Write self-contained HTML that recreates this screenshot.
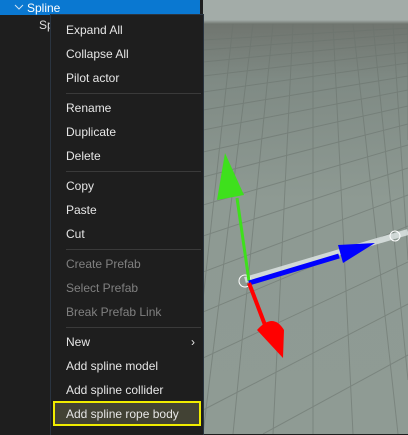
<!DOCTYPE html>
<html><head><style>
body{margin:0;width:408px;height:434px;overflow:hidden;position:relative;background:#1e1e1e;font-family:"Liberation Sans",sans-serif;}
.vp{position:absolute;left:203px;top:0;width:205px;height:434px;background:linear-gradient(#a3aca8 0,#a3aca8 20px,#70756f 24px,#7f8a84 80px,#8e9a93 200px,#8f9b94 434px);overflow:hidden}
.sel{position:absolute;left:0;top:0;width:200px;height:15px;background:#0a78d1;color:#fff;font-size:12px}
.menu{position:absolute;left:50px;top:14px;width:152px;height:420px;background:#1e1e1e;border-left:1px solid #2a3440;border-top:1px solid #2a3440;border-right:1px solid #2a3440}
.it{position:absolute;left:15px;font-size:12px;color:#e6e6e6;line-height:24px}
.dis{color:#808080}
.sep{position:absolute;left:15px;width:135px;height:1px;background:#3a3a3a}
</style></head><body>
<div class="sel"><svg style="position:absolute;left:14px;top:4px" width="10" height="7"><path d="M1 1 L5 5 L9 1" stroke="#cfe3f5" fill="none"/></svg><span style="position:absolute;left:27px;top:1px">Spline</span></div>
<div style="position:absolute;left:39px;top:18px;color:#ddd;font-size:12px">Sp</div>
<div class="vp">
<svg width="205" height="434" style="position:absolute;left:0;top:0">
<g stroke="#6a736d" stroke-width="1" fill="none" opacity="0.55">
<path d="M0 40 L205 28 M0 50 L205 34 M0 62 L205 42 M0 76 L205 52 M0 92 L205 63 M0 110 L205 76 M0 130 L205 90 M0 152 L205 106 M0 177 L205 124 M0 205 L205 145 M0 236 L205 168 M0 272 L205 195 M0 312 L205 226 M0 358 L205 262 M0 410 L205 304 M60 434 L205 355"/>
<path d="M0 300 L30 24 M0 434 L50 24 M30 434 L70 24 M70 434 L90 24 M110 434 L110 24 M150 434 L130 24 M195 434 L150 24 M205 380 L170 24 M205 260 L190 24 M205 140 L205 24"/>
</g>
<path d="M42 280 L205 232" stroke="#e8eeee" stroke-width="6" opacity="0.75"/>
<ellipse cx="42" cy="281" rx="6" ry="6" fill="none" stroke="#fff"/>
<ellipse cx="192" cy="236" rx="5" ry="5" fill="none" stroke="#fff"/>
<path d="M46 281 L34 198" stroke="#3ee01c" stroke-width="3"/>
<path d="M22 153 L14 200 L41 195 Z" fill="#3ee01c"/>
<path d="M46 283 L136 256" stroke="#0000ff" stroke-width="5"/>
<path d="M135 245 L140 263 L172 243 Z" fill="#0000ff"/>
<path d="M46 283 L62 325" stroke="#ff0000" stroke-width="4"/>
<path d="M54 330 Q70 312 81 330 L80 358 Z" fill="#ff0000"/>
</svg>
</div>
<div class="menu">
<div class="it" style="top:3px">Expand All</div>
<div class="it" style="top:27px">Collapse All</div>
<div class="it" style="top:51px">Pilot actor</div>
<div class="sep" style="top:78px"></div>
<div class="it" style="top:81px">Rename</div>
<div class="it" style="top:105px">Duplicate</div>
<div class="it" style="top:129px">Delete</div>
<div class="sep" style="top:156px"></div>
<div class="it" style="top:159px">Copy</div>
<div class="it" style="top:183px">Paste</div>
<div class="it" style="top:207px">Cut</div>
<div class="sep" style="top:234px"></div>
<div class="it dis" style="top:237px">Create Prefab</div>
<div class="it dis" style="top:261px">Select Prefab</div>
<div class="it dis" style="top:285px">Break Prefab Link</div>
<div class="sep" style="top:312px"></div>
<div class="it" style="top:315px">New</div>
<div class="it" style="top:315px;left:140px">&#x203A;</div>
<div class="it" style="top:339px">Add spline model</div>
<div class="it" style="top:363px">Add spline collider</div>
<div style="position:absolute;left:2px;top:386px;width:144px;height:21px;border:2px solid #f0ec00;background:#424234"></div>
<div class="it" style="top:387px">Add spline rope body</div>
</div>
</body></html>
